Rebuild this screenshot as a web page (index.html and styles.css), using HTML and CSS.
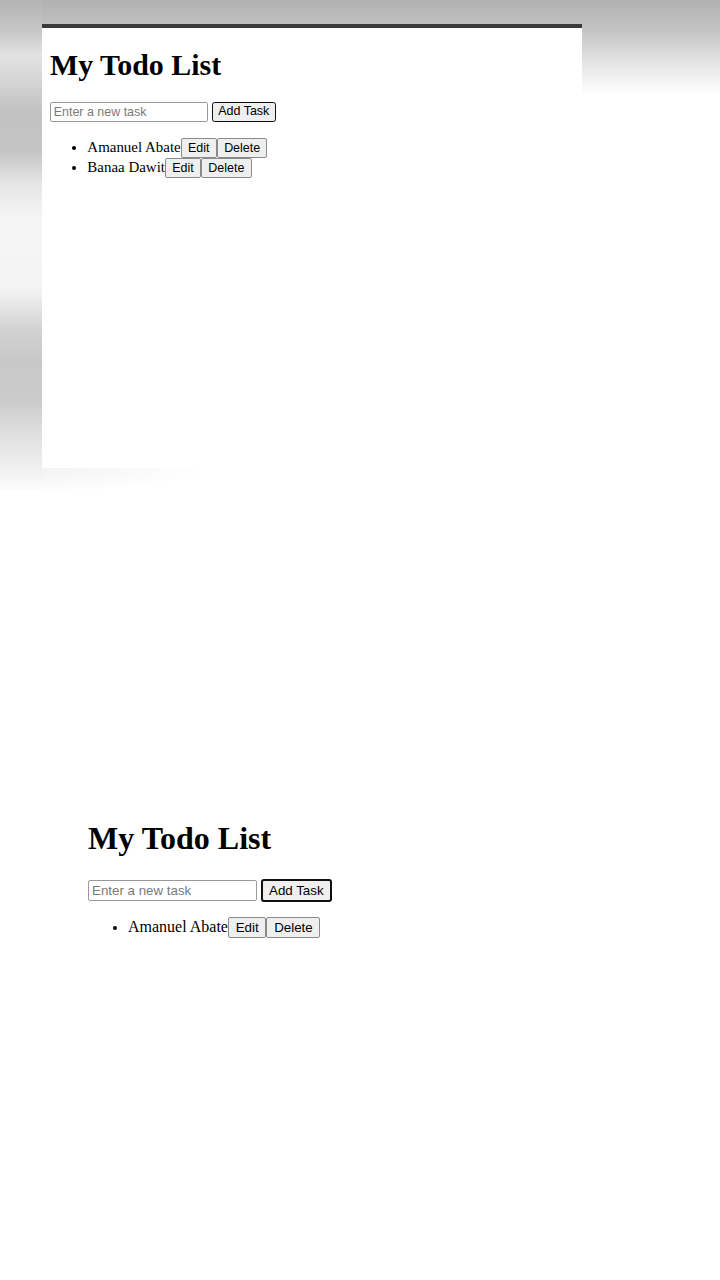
FILE: index.html
```html
<!DOCTYPE html>
<html lang="en">
<head>
<meta charset="utf-8">
<title>My Todo List</title>
<link rel="stylesheet" href="styles.css">
</head>
<body>
<section class="screen">
  <div class="panel">
    <div class="app app-small">
      <h1 class="title">My Todo List</h1>
      <div class="add-row"><input class="task-input" type="text" placeholder="Enter a new task"> <button class="btn btn-focus">Add Task</button></div>
      <ul class="tasks">
        <li class="task">Amanuel Abate<button class="btn">Edit</button><button class="btn">Delete</button></li>
        <li class="task">Banaa Dawit<button class="btn">Edit</button><button class="btn">Delete</button></li>
      </ul>
    </div>
  </div>
</section>
<section class="second">
  <div class="app">
    <h1 class="title">My Todo List</h1>
    <div class="add-row"><input class="task-input" type="text" placeholder="Enter a new task"> <button class="btn btn-focus">Add Task</button></div>
    <ul class="tasks">
      <li class="task">Amanuel Abate<button class="btn">Edit</button><button class="btn">Delete</button></li>
    </ul>
  </div>
</section>
</body>
</html>
```

FILE: styles.css
```css
html, body {
  margin: 0;
  padding: 0;
  background: #ffffff;
}

body {
  width: 720px;
  height: 1280px;
  overflow: hidden;
  font-family: "Liberation Serif", "Times New Roman", serif;
  color: #000;
}

.screen {
  height: 490px;
  padding-top: 24px;
  box-sizing: border-box;
  background-color: #fff;
  background-image:
    linear-gradient(to bottom,
      #b4b4b4 0px, #c6c6c6 30px, #e2e2e2 55px, #d6d6d6 80px,
      #c2c2c2 110px, #c4c4c4 150px, #e6e6e6 185px, #f6f6f6 220px,
      #f3f3f3 290px, #d2d2d2 330px, #c8c8c8 360px, #cbcbcb 400px,
      #e2e2e2 440px, #f0f0f0 468px, #ffffff 495px),
    radial-gradient(ellipse 210px 26px at 0 0, rgba(0, 0, 0, 0.06), rgba(0, 0, 0, 0)),
    linear-gradient(to bottom, #b1b1b1 0px, #c4c4c4 30px, #e6e6e6 65px, #ffffff 95px);
  background-size: 42px 100%, 260px 30px, 100% 100%;
  background-position: 0 0, 0 468px, 0 0;
  background-repeat: no-repeat, no-repeat, no-repeat;
}

.panel {
  margin-left: 42px;
  width: 540px;
  height: 444px;
  box-sizing: border-box;
  background: #ffffff;
  border-top: 4px solid #3a3a3a;
}

.app-small {
  zoom: 0.935;
  padding: 1px 0 0 8.5px;
  margin-top: -1px;
}

.second {
  padding: 309px 0 0 88px;
}

.title {
  font-family: "Liberation Serif", "Times New Roman", serif;
  font-size: 32px;
  font-weight: bold;
  margin: 21.44px 0;
  line-height: normal;
}

.add-row {
  font-size: 16px;
  line-height: normal;
}

.task-input {
  font-family: "Liberation Sans", Arial, sans-serif;
  font-size: 13.33px;
  width: 169px;
  height: 21px;
  box-sizing: border-box;
  padding: 1px 3px;
  margin: 0;
  border: 1px solid #9a9a9a;
  border-radius: 2px;
  background: #fff;
  color: #000;
  vertical-align: middle;
}

.task-input::placeholder {
  color: #7a7a7a;
}

.btn {
  font-family: "Liberation Sans", Arial, sans-serif;
  font-size: 13.33px;
  line-height: 15px;
  padding: 2px 6.75px;
  margin: 0;
  border: 1px solid #8a8a8a;
  border-radius: 2px;
  background: #efefef;
  color: #000;
  vertical-align: middle;
}

.btn-focus {
  border: 2px solid #111;
  border-radius: 3px;
  padding: 1px 6px;
  line-height: 17px;
}

.tasks {
  margin: 15px 0 16px;
  padding-left: 40px;
  list-style: disc;
  font-size: 16px;
}

.app-small .tasks {
  margin-top: 17.5px;
}

.task {
  line-height: 18px;
  height: 21px;
}

.task::marker {
  font-size: 14px;
}

.task .btn {
  vertical-align: baseline;
}
```
